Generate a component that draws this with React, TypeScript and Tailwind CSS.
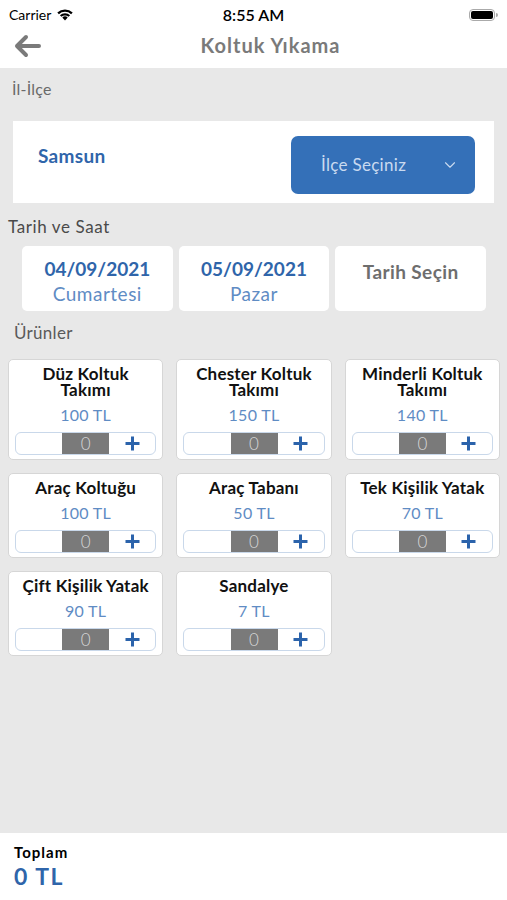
import { ChevronDown } from "lucide-react";

const products = [
  { name: "Düz Koltuk\nTakımı", price: "100 TL" },
  { name: "Chester Koltuk\nTakımı", price: "150 TL" },
  { name: "Minderli Koltuk\nTakımı", price: "140 TL" },
  { name: "Araç Koltuğu", price: "100 TL" },
  { name: "Araç Tabanı", price: "50 TL" },
  { name: "Tek Kişilik Yatak", price: "70 TL" },
  { name: "Çift Kişilik Yatak", price: "90 TL" },
  { name: "Sandalye", price: "7 TL" },
];

const dates = [
  { date: "04/09/2021", day: "Cumartesi" },
  { date: "05/09/2021", day: "Pazar" },
];

function Stepper() {
  return (
    <div className="mx-[6px] flex h-[23px] overflow-hidden rounded-[6px] border border-[#c9d8ea] bg-white">
      <div className="flex-1" />
      <div className="flex w-[47px] items-center justify-center bg-[#7a7a7a] text-[17px] font-light text-[#d8d8d8]">0</div>
      <div className="flex flex-1 items-center justify-center">
        <svg width="17" height="17" viewBox="0 0 17 17">
          <path d="M8.5 1.5v14M1.5 8.5h14" stroke="#2b63ab" strokeWidth="3" />
        </svg>
      </div>
    </div>
  );
}

export default function App() {
  return (
    <div className="flex h-[900px] w-[507px] flex-col bg-[#e8e8e8] font-['Lato',sans-serif]">
      {/* status bar + nav */}
      <div className="bg-white">
        <div className="relative flex h-[29px] items-center px-[9px] text-[14px] text-black">
          <span>Carrier</span>
          <svg className="ml-[5px]" width="18" height="13" viewBox="0 0 18 13">
            <path d="M9 12.5 6.3 9.6a3.8 3.8 0 0 1 5.4 0Z" fill="#000" />
            <path d="M3.9 7.2a7.4 7.4 0 0 1 10.2 0l-1.6 1.6a5.1 5.1 0 0 0-7 0Z" fill="#000" />
            <path d="M1.3 4.6a11.1 11.1 0 0 1 15.4 0l-1.6 1.6a8.8 8.8 0 0 0-12.2 0Z" fill="#000" />
          </svg>
          <span className="absolute left-1/2 -translate-x-1/2 text-[16px] font-semibold">8:55 AM</span>
          <div className="ml-auto flex items-center">
            <div className="flex h-[12px] w-[26px] items-center rounded-[4px] border border-[#aaa] p-[1px]">
              <div className="h-full w-full rounded-[2px] bg-black" />
            </div>
            <div className="ml-[1px] h-[4px] w-[2px] rounded-r bg-[#aaa]" />
          </div>
        </div>
        <div className="relative flex h-[39px] items-center justify-center pb-[7px]">
          <svg className="absolute left-[12px] top-[4px]" width="30" height="26" viewBox="0 0 30 26">
            <path d="M27 13H5M14 4l-9 9 9 9" fill="none" stroke="#7a7a7a" strokeWidth="4" strokeLinecap="round" strokeLinejoin="round" />
          </svg>
          <span className="ml-[34px] text-[20px] font-bold tracking-[1px] text-[#7a7a7a]">Koltuk Yıkama</span>
        </div>
      </div>

      <div className="flex flex-1 flex-col">
        <div className="px-[12px] pt-[9px] text-[16px] tracking-[0.2px] text-[#6a6a6a]">İl-İlçe</div>
        <div className="mx-[13px] mt-[20px] flex h-[82px] items-center justify-between bg-white pl-[25px] pr-[19px]">
          <span className="-mt-[12px] text-[19px] font-bold tracking-[0.3px] text-[#2f65aa]">Samsun</span>
          <button className="mt-[6px] flex h-[58px] w-[184px] items-center justify-between rounded-[7px] bg-[#3470b8] pl-[30px] pr-[16px] text-[17px] tracking-[0.3px] text-[#c9daf0]">
            <span>İlçe Seçiniz</span>
            <ChevronDown size={18} strokeWidth={1.5} />
          </button>
        </div>

        <div className="mt-[11px] px-[8px] text-[17px] tracking-[0.6px] text-[#4a4a4a]">Tarih ve Saat</div>
        <div className="mt-[6px] grid grid-cols-3 gap-[6px] pl-[22px] pr-[21px]">
          {dates.map((d) => (
            <div key={d.date} className="flex h-[65px] flex-col items-center rounded-[5px] bg-white pt-[10px]">
              <span className="text-[19px] font-bold leading-[25px] text-[#2f65aa]">{d.date}</span>
              <span className="text-[19px] leading-[25px] tracking-[0.5px] text-[#5f8cc4]">{d.day}</span>
            </div>
          ))}
          <div className="flex h-[65px] flex-col items-center rounded-[5px] bg-white pt-[12px]">
            <span className="text-[19px] font-bold tracking-[0.4px] text-[#6e6e6e]">Tarih Seçin</span>
          </div>
        </div>

        <div className="mt-[9px] px-[14px] text-[17px] tracking-[0.3px] text-[#5a5a5a]">Ürünler</div>
        <div className="mt-[14px] grid grid-cols-3 gap-[13px] pl-[8px] pr-[7px]">
          {products.map((p) => (
            <div key={p.name} className="flex flex-col rounded-[5px] border border-[#d6d6d6] bg-white pb-[4px] pt-[6px]">
              <div className="whitespace-pre-line px-[2px] text-center text-[17px] font-bold leading-[16px] tracking-[0.2px] text-[#111]">{p.name}</div>
              <div className="mb-[8px] mt-[8px] text-center text-[16px] leading-[18px] tracking-[0.3px] text-[#5f8cc4]">{p.price}</div>
              <div className="mt-auto">
                <Stepper />
              </div>
            </div>
          ))}
        </div>
      </div>

      <div className="h-[67px] bg-white px-[14px] pt-[10px]">
        <div className="text-[15px] font-bold leading-[18px] tracking-[1px] text-black">Toplam</div>
        <div className="text-[23px] font-bold leading-[30px] tracking-[1.5px] text-[#2f65aa]">0 TL</div>
      </div>
    </div>
  );
}
